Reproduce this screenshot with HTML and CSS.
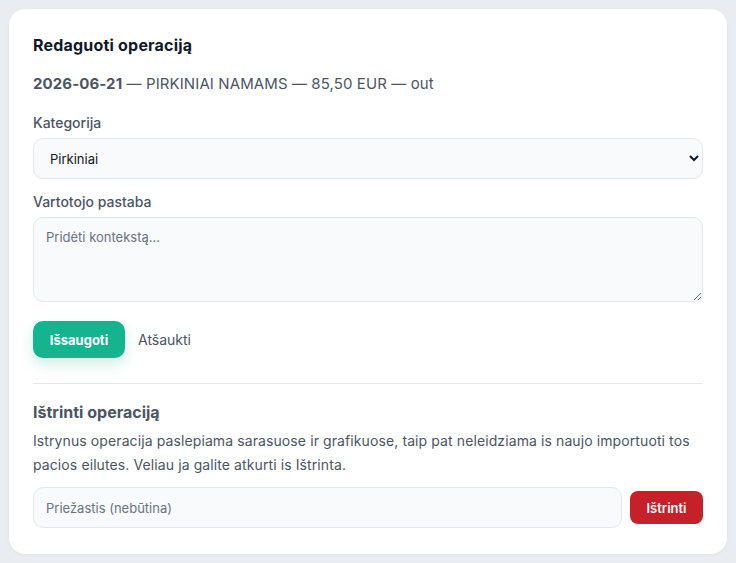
FILE: index.html
```html
<!DOCTYPE html>
<html lang="lt">
<head>
<meta charset="utf-8">
<link rel="stylesheet" href="styles.css">
</head>
<body>
<div class="card">
  <h2 class="title">Redaguoti operaciją</h2>
  <p class="meta"><strong>2026-06-21</strong> — PIRKINIAI NAMAMS — 85,50 EUR — out</p>
  <label class="label" for="cat">Kategorija</label>
  <select id="cat" class="select"><option>Pirkiniai</option></select>
  <label class="label label-gap" for="note">Vartotojo pastaba</label>
  <textarea id="note" class="textarea" placeholder="Pridėti kontekstą..."></textarea>
  <div class="actions">
    <button class="btn-save">Išsaugoti</button>
    <button class="btn-cancel">Atšaukti</button>
  </div>
  <hr class="divider">
  <h3 class="del-title">Ištrinti operaciją</h3>
  <p class="del-text">Istrynus operacija paslepiama sarasuose ir grafikuose, taip pat neleidziama is naujo importuoti tos pacios eilutes. Veliau ja galite atkurti is Ištrinta.</p>
  <div class="del-row">
    <input class="input" type="text" placeholder="Priežastis (nebūtina)">
    <button class="btn-del">Ištrinti</button>
  </div>
</div>
</body>
</html>
```
FILE: styles.css
```css
* { box-sizing: border-box; }
html, body { margin: 0; }
body {
  background: #e9ecf1;
  padding: 9px;
  font-family: Inter, "Noto Sans", sans-serif;
  color: #4b5563;
}
.card {
  background: #fff;
  border-radius: 16px;
  padding: 24px 24px 26px;
  display: flex;
  flex-direction: column;
  box-shadow: 0 1px 3px rgba(15, 23, 42, 0.06);
}
.title {
  margin: 0;
  font-size: 16px;
  line-height: 24px;
  font-weight: 700;
  letter-spacing: 0.2px;
  color: #111827;
}
.meta {
  margin: 15px 0 0;
  font-size: 15px;
  line-height: 24px;
  letter-spacing: 0.1px;
  color: #4b5563;
}
.meta strong { font-weight: 700; }
.label {
  margin: 17px 0 5px;
  font-size: 14px;
  line-height: 20px;
  font-weight: 500;
  color: #4b5563;
}
.label-gap { margin-top: 13px; }
.select {
  height: 41px;
  border: 1px solid #e5e7eb;
  border-radius: 10px;
  background: #f8fafc;
  padding: 0 12px;
  font-family: inherit;
  font-size: 13px;
  color: #111827;
}
.textarea {
  height: 85px;
  border: 1px solid #e5e7eb;
  border-radius: 10px;
  background: #f8fafc;
  padding: 11px 12px;
  font-family: inherit;
  font-size: 13px;
  color: #111827;
  resize: vertical;
}
.textarea::placeholder, .input::placeholder { color: #6b7280; }
.actions {
  margin-top: 19px;
  display: flex;
  align-items: center;
  gap: 5px;
}
.btn-save {
  height: 37px;
  width: 92px;
  border: 0;
  border-radius: 10px;
  background: #14b48f;
  color: #fff;
  font-family: inherit;
  font-size: 13px;
  font-weight: 700;
  box-shadow: 0 6px 14px rgba(20, 180, 143, 0.22);
}
.btn-cancel {
  border: 0;
  background: none;
  padding: 0 8px;
  font-family: inherit;
  font-size: 14px;
  color: #4b5563;
}
.divider {
  margin: 25px 0 0;
  border: 0;
  border-top: 1px solid #e5e7eb;
}
.del-title {
  margin: 16px 0 0;
  font-size: 16px;
  line-height: 24px;
  font-weight: 700;
  color: #4b5563;
}
.del-text {
  margin: 5px 0 0;
  font-size: 14px;
  line-height: 24px;
  letter-spacing: 0.1px;
  color: #4b5563;
}
.del-row {
  margin-top: 10px;
  display: flex;
  align-items: center;
  gap: 8px;
}
.input {
  flex: 1;
  height: 41px;
  border: 1px solid #e5e7eb;
  border-radius: 10px;
  background: #f8fafc;
  padding: 0 12px;
  font-family: inherit;
  font-size: 13px;
}
.btn-del {
  width: 73px;
  height: 33px;
  border: 0;
  border-radius: 8px;
  background: #c62128;
  color: #fff;
  font-family: inherit;
  font-size: 13px;
  font-weight: 600;
}
```
